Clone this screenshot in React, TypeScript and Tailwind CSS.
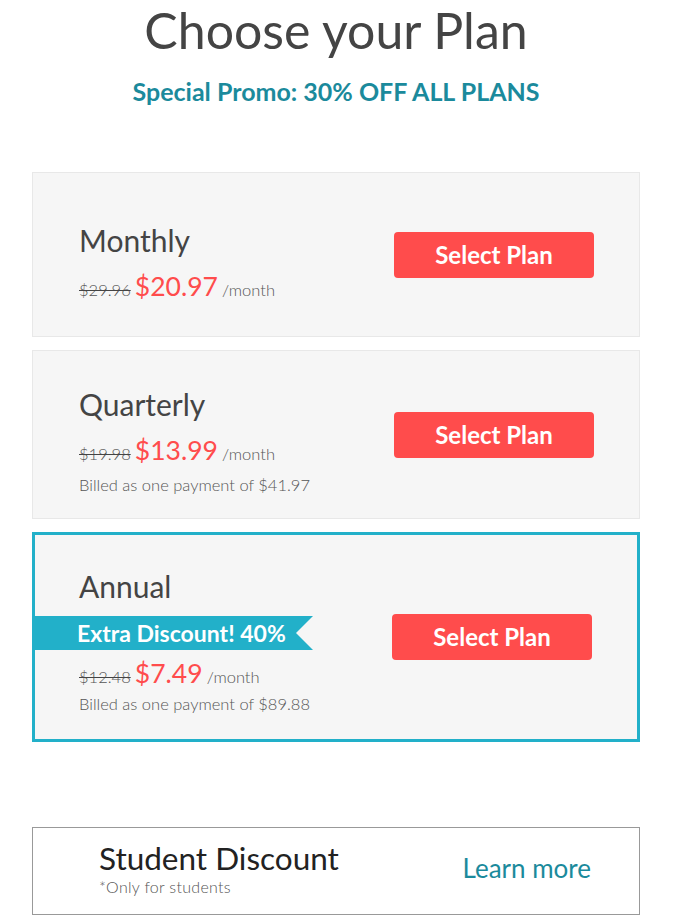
import React from 'react';

interface Plan {
  name: string;
  oldPrice: string;
  price: string;
  billed?: string;
  featured?: boolean;
}

const plans: Plan[] = [
  { name: 'Monthly', oldPrice: '$29.96', price: '$20.97' },
  { name: 'Quarterly', oldPrice: '$19.98', price: '$13.99', billed: 'Billed as one payment of $41.97' },
  { name: 'Annual', oldPrice: '$12.48', price: '$7.49', billed: 'Billed as one payment of $89.88', featured: true },
];

const PriceLine: React.FC<{ plan: Plan }> = ({ plan }) => (
  <div className="mt-3 h-[32px] whitespace-nowrap leading-[32px]">
    <span className="text-[16.5px] font-light text-[#555] line-through decoration-[#444]">{plan.oldPrice}</span>{' '}
    <span className="text-[26.5px] text-[#ff4c4c]">{plan.price}</span>{' '}
    <span className="text-[16.5px] font-light text-[#555]">/month</span>
  </div>
);

const SelectButton: React.FC = () => (
  <button className="h-[46px] w-[200px] shrink-0 rounded-[4px] bg-[#ff4c4c] text-[24px] font-bold text-white">
    Select Plan
  </button>
);

const App: React.FC = () => {
  return (
    <div className="min-h-[921px] bg-white font-['Lato',sans-serif]">
      <div className="w-[672px] px-8 pt-[2px]">
        <h1 className="text-center text-[50px] leading-[56px] text-[#444]">Choose your Plan</h1>
        <p className="mt-[18px] text-center text-[25px] font-bold leading-[30px] text-[#1b8a9c]">
          Special Promo: 30% OFF ALL PLANS
        </p>

        <div className="mt-[66px] flex flex-col gap-[13px]">
          {plans.map((plan) =>
            plan.featured ? (
              <div
                key={plan.name}
                className="flex items-center justify-between border-[3px] border-[#22b0c9] bg-[#f6f6f6] pr-[45px]"
              >
                <div className="pt-[33px] pb-[24px]">
                  <h2 className="pl-[44px] text-[30px] leading-[36px] text-[#444]">{plan.name}</h2>
                  <div className="mt-3 flex h-[34px] w-[278px] items-center pl-[42px] text-[23px] font-bold leading-[30px] text-white bg-[#22b0c9] [clip-path:polygon(0_0,100%_0,calc(100%-17px)_50%,100%_100%,0_100%)]">
                    Extra Discount! 40%
                  </div>
                  <div className="pl-[44px]">
                    <div className="-mt-[5px]">
                      <PriceLine plan={plan} />
                    </div>
                    <p className="mt-[4px] text-[16.5px] font-light leading-[22px] text-[#555]">{plan.billed}</p>
                  </div>
                </div>
                <SelectButton />
              </div>
            ) : (
              <div
                key={plan.name}
                className="flex items-center justify-between border border-[#e8e8e8] bg-[#f6f6f6] pl-[46px] pr-[45px]"
              >
                <div className={plan.billed ? 'pt-[35px] pb-[22px]' : 'pt-[49px] pb-[34px]'}>
                  <h2 className="text-[30px] leading-[36px] text-[#444]">{plan.name}</h2>
                  <PriceLine plan={plan} />
                  {plan.billed && (
                    <p className="mt-2 text-[16.5px] font-light leading-[22px] text-[#555]">{plan.billed}</p>
                  )}
                </div>
                <SelectButton />
              </div>
            )
          )}
        </div>

        <div className="mt-[85px] flex items-center justify-between border border-[#999] pl-[66px] pr-[48px] pt-[12px] pb-[18px]">
          <div>
            <h3 className="text-[31.5px] leading-[36px] text-[#222]">Student Discount</h3>
            <p className="mt-[2px] text-[16px] font-light tracking-[0.3px] leading-[18px] text-[#555]">*Only for students</p>
          </div>
          <a href="#" className="text-[26px] leading-[32px] text-[#1b8a9c]">Learn more</a>
        </div>
      </div>
    </div>
  );
};

export default App;
